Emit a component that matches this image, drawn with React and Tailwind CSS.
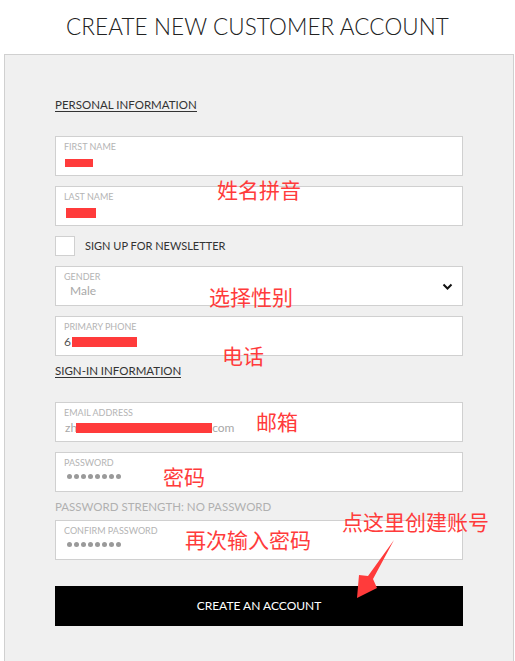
import React from "react";

const latin = { fontFamily: "Lato, 'Open Sans', sans-serif" };
const cjk = { fontFamily: "'Noto Sans CJK SC', sans-serif" };

function Field({ label, children, className = "" }) {
  return (
    <div className={"relative h-[40px] w-[408px] border border-[#d0d0d0] bg-white pl-[8px] " + className}>
      <div className="pt-[4px] text-[9px] leading-[11px] text-[#b4b4b4]" style={latin}>{label}</div>
      {children}
    </div>
  );
}

function Dots() {
  return (
    <div className="mt-[6px] ml-[3px] flex gap-[2px]">
      {[0, 1, 2, 3, 4, 5, 6, 7].map((i) => (
        <div key={i} className="h-[5px] w-[5px] rounded-full bg-[#9a9a9a]" />
      ))}
    </div>
  );
}

function Note({ children, className }) {
  return (
    <div className={"absolute text-[21px] leading-[21px] text-[#ff3b3b] whitespace-nowrap " + className} style={cjk}>
      {children}
    </div>
  );
}

export default function App() {
  return (
    <div className="relative h-[661px] w-[515px] overflow-hidden bg-white" style={latin}>
      <div className="flex h-[54px] items-center justify-center pb-[1px]">
        <h1 className="text-[22.5px] font-light tracking-[0.1px] text-[#222]">CREATE NEW CUSTOMER ACCOUNT</h1>
      </div>
      <div className="ml-[4px] flex h-[620px] w-[510px] flex-col border border-b-0 border-[#d0d0d0] bg-[#f0f0f0] pl-[50px]">
        <div className="mt-[43px] w-fit border-b border-[#333] text-[11.5px] leading-[13px] text-[#333]">PERSONAL INFORMATION</div>
        <div className="mt-[24px] flex flex-col">
          <Field label="FIRST NAME">
            <div className="ml-[1px] mt-[7px] h-[8px] w-[28px] bg-[#ff3b3b]" />
          </Field>
          <Field label="LAST NAME" className="mt-[10px]">
            <div className="ml-[2px] mt-[6px] h-[10px] w-[30px] bg-[#ff3b3b]" />
          </Field>
          <div className="mt-[10px] flex h-[20px] items-center">
            <div className="h-[20px] w-[20px] border border-[#d0d0d0] bg-white" />
            <span className="ml-[10px] text-[11px] text-[#333]">SIGN UP FOR NEWSLETTER</span>
          </div>
          <Field label="GENDER" className="mt-[10px]">
            <div className="ml-[6px] mt-[2px] text-[12px] leading-[14px] text-[#a8a8a8]">Male</div>
            <svg className="absolute left-[386px] top-[16px]" width="11" height="8" viewBox="0 0 11 8">
              <polyline points="1.5,1.5 5.5,5.5 9.5,1.5" fill="none" stroke="#111" strokeWidth="2" />
            </svg>
          </Field>
          <Field label="PRIMARY PHONE" className="mt-[10px]">
            <div className="mt-[4px] flex items-center text-[12px] leading-[12px] text-[#555]">
              <span>6</span>
              <div className="ml-[1px] h-[10px] w-[65px] bg-[#ff3b3b]" />
            </div>
          </Field>
        </div>
        <div className="mt-[8px] w-fit border-b border-[#333] text-[11.5px] leading-[13px] text-[#333]">SIGN-IN INFORMATION</div>
        <div className="mt-[24px] flex flex-col">
          <Field label="EMAIL ADDRESS">
            <div className="mt-[4px] flex items-center text-[12px] leading-[12px] text-[#a8a8a8]">
              <span className="ml-[1px]">zh</span>
              <div className="ml-[-1px] h-[10px] w-[136px] bg-[#ff3b3b]" />
              <span>com</span>
            </div>
          </Field>
          <Field label="PASSWORD" className="mt-[10px]">
            <Dots />
          </Field>
          <div className="mt-[8px] text-[11.5px] leading-[14px] text-[#b0b0b0]">PASSWORD STRENGTH: NO PASSWORD</div>
          <Field label="CONFIRM PASSWORD" className="mt-[6px]">
            <Dots />
          </Field>
          <button className="mt-[26px] flex h-[40px] w-[408px] items-center justify-center bg-black text-[12px] text-white">
            CREATE AN ACCOUNT
          </button>
        </div>
      </div>

      <Note className="left-[217px] top-[179px]">姓名拼音</Note>
      <Note className="left-[209px] top-[286px]">选择性别</Note>
      <Note className="left-[222px] top-[345px]">电话</Note>
      <Note className="left-[256px] top-[411px]">邮箱</Note>
      <Note className="left-[163px] top-[466px]">密码</Note>
      <Note className="left-[185px] top-[529px]">再次输入密码</Note>
      <Note className="left-[342px] top-[511px]">点这里创建账号</Note>
      <svg className="absolute left-0 top-0 pointer-events-none" width="515" height="661">
        <polygon points="394,540 373,579 377,588 357,598 359,575 368,576" fill="#ff3b3b" />
      </svg>
    </div>
  );
}
